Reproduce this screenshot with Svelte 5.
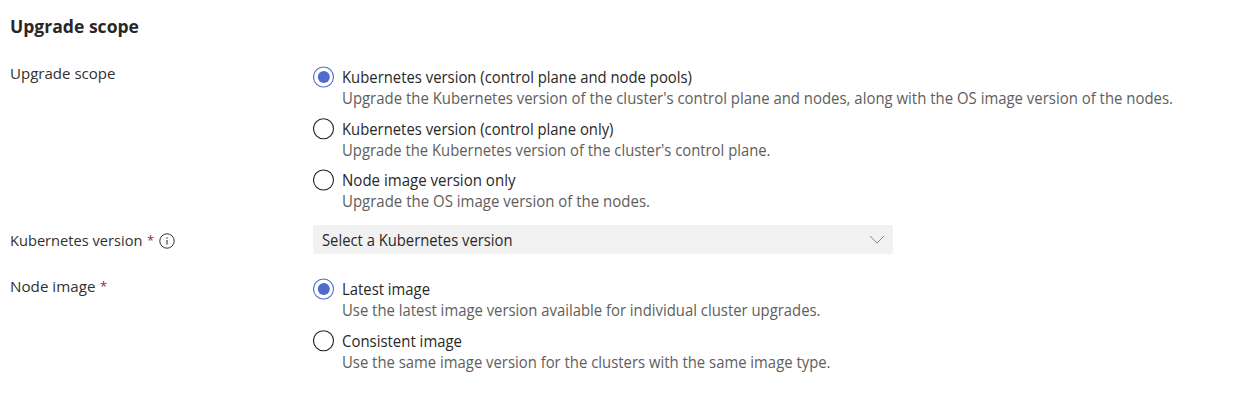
<script>
  const scope = [
    ['Kubernetes version (control plane and node pools)', 350, "Upgrade the Kubernetes version of the cluster's control plane and nodes, along with the OS image version of the nodes.", 831],
    ['Kubernetes version (control plane only)', 271.5, "Upgrade the Kubernetes version of the cluster's control plane.", 428.5],
    ['Node image version only', 173.5, 'Upgrade the OS image version of the nodes.', 308]
  ];
  const images = [
    ['Latest image', 88, 'Use the latest image version available for individual cluster upgrades.', 478.5],
    ['Consistent image', 120, 'Use the same image version for the clusters with the same image type.', 488.5]
  ];
</script>

{#snippet line(text, w, h)}
  <svg class="line" width={w} height={h}><text x="0" y="16" textLength={w} lengthAdjust="spacingAndGlyphs">{text}</text></svg>
{/snippet}

{#snippet group(items)}
  <div class="group">
    {#each items as [title, tw, desc, dw], i}
      <div class="option">
        <svg class="radio" width="22" height="22" viewBox="0 0 22 22">
          <circle cx="10.5" cy={i === 1 ? 10.7 : 11} r="10" fill="#fff" stroke={i === 0 ? '#4f6bcf' : '#222'} stroke-width="1.1" />
          {#if i === 0}<circle cx="10.8" cy="11" r="6" fill="#4f6bcf" />{/if}
        </svg>
        <div class="copy">
          {@render line(title, tw, 21)}
          <div class="desc">{@render line(desc, dw, 21)}</div>
        </div>
      </div>
    {/each}
  </div>
{/snippet}

<main>
  <h2>{@render line('Upgrade scope', 129, 22)}</h2>
  <section class="row scope">
    <div class="label">{@render line('Upgrade scope', 105.5, 21)}</div>
    {@render group(scope)}
  </section>
  <section class="row version">
    <div class="label">{@render line('Kubernetes version', 132.5, 21)}<span class="star">*</span>
      <svg class="info" width="16" height="16" viewBox="0 0 16 16"><circle cx="8" cy="8" r="7.2" fill="none" stroke="#333" /><path d="M8 7v4.5" stroke="#333" stroke-width="1.1" /><circle cx="8" cy="4.9" r=".75" fill="#333" /></svg>
    </div>
    <div class="select">
      {@render line('Select a Kubernetes version', 190.5, 21)}
      <svg width="16" height="10" viewBox="0 0 16 10"><path d="M1 1l7 7 7-7" fill="none" stroke="#888" /></svg>
    </div>
  </section>
  <section class="row image">
    <div class="label">{@render line('Node image', 85.5, 21)}<span class="star">*</span></div>
    {@render group(images)}
  </section>
</main>

<style>
  :global(body) { margin: 0; background: #fff; }
  main { box-sizing: border-box; width: 1245px; height: 418px; padding: 17px 0 0 10px; font: 15.5px "Open Sans", "Noto Sans", sans-serif; color: #292827; overflow: hidden; }
  h2 { margin: 0; height: 22px; font-size: 17.5px; font-weight: 700; }
  .line { display: block; flex: none; overflow: visible; fill: currentColor; }
  .row { display: flex; }
  .label { width: 303px; flex: none; display: flex; align-items: flex-start; color: #323130; font-size: 15px; }
  .scope { box-sizing: border-box; padding-top: 27px; height: 186px; }
  .scope .label { margin-top: -3px; }
  .option { display: flex; height: 52px; }
  .scope .option:nth-child(2) { height: 51px; }
  .radio { flex: none; margin-right: 7px; }
  .copy { display: flex; flex-direction: column; padding-top: 1px; }
  .desc { color: #605e5c; }
  .version { height: 53px; }
  .version .label { padding-top: 5px; box-sizing: border-box; }
  .star { color: #8e2849; font-size: 13px; line-height: 20px; margin-left: 4.5px; width: 7px; }
  .info { margin: 3px 0 0 5px; }
  .select { box-sizing: border-box; width: 580px; height: 29px; padding: 1px 8px 0 9px; background: #f1f1f1; border-radius: 2px; display: flex; align-items: center; justify-content: space-between; }
  .image .label { margin-top: -2px; }
</style>
